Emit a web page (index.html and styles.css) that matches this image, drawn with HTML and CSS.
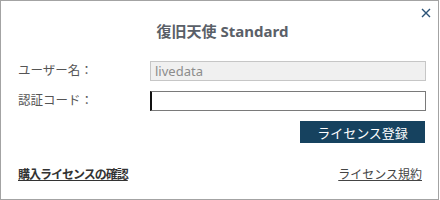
FILE: index.html
```html
<!DOCTYPE html>
<html lang="ja">
  <head>
    <meta charset="UTF-8" />
    <title>復旧天使 Standard</title>
    <link rel="stylesheet" href="styles.css">
  </head>
  <body>
    <div class="dialog">
      <button class="close-btn" aria-label="閉じる">
        <svg width="10" height="10" viewBox="0 0 10 10">
          <path d="M1 1 L9 9 M9 1 L1 9" stroke="#2b5377" stroke-width="1.4" fill="none" />
        </svg>
      </button>

      <h1 class="title">復旧天使 Standard</h1>

      <div class="form">
        <label class="label" for="user-name">ユーザー名：</label>
        <input type="text" id="user-name" class="field field-disabled" value="livedata" disabled />

        <label class="label" for="auth-code">認証コード：</label>
        <input type="text" id="auth-code" class="field field-active" />
      </div>

      <div class="actions">
        <button class="register-btn">ライセンス登録</button>
      </div>

      <div class="footer">
        <a href="#" class="link link-bold">購入ライセンスの確認</a>
        <a href="#" class="link">ライセンス規約</a>
      </div>
    </div>
  </body>
</html>
```

FILE: styles.css
```css
body {
  margin: 0;
  background: #fff;
  font-family: "Noto Sans", "Noto Sans CJK JP", sans-serif;
}

.dialog {
  position: relative;
  box-sizing: border-box;
  width: 439px;
  height: 200px;
  border: 1px solid #a3a3a3;
  padding: 0 13px 0 17px;
  background: #fff;
}

.close-btn {
  position: absolute;
  top: 6px;
  right: 6px;
  width: 12px;
  height: 12px;
  padding: 0;
  border: none;
  background: none;
  display: flex;
  align-items: center;
  justify-content: center;
  cursor: pointer;
}

.title {
  margin: 0;
  padding-top: 19px;
  height: 22px;
  line-height: 22px;
  text-align: center;
  font-size: 15px;
  font-weight: bold;
  color: #5a6068;
  padding-left: 2px;
}

.form {
  display: grid;
  grid-template-columns: 132px 1fr;
  row-gap: 10px;
  margin-top: 19px;
  align-items: center;
}

.label {
  font-size: 12.5px;
  color: #555;
  line-height: 20px;
}

.field {
  box-sizing: border-box;
  width: 276px;
  height: 20px;
  margin: 0;
  padding: 0 4px;
  font-family: "Noto Sans", "Noto Sans CJK JP", sans-serif;
  font-size: 13px;
  outline: none;
}

.field-disabled {
  background: #f0f0f0;
  border: 1px solid #c6c6c6;
  color: #8c8c8c;
}

.field-active {
  background: #fff;
  border: 1px solid #7a7a7a;
  border-left: 2px solid #111;
}

.actions {
  display: flex;
  justify-content: flex-end;
  margin-top: 10px;
  padding-right: 0;
}

.register-btn {
  width: 125px;
  height: 22px;
  padding: 0;
  border: none;
  background: #16425f;
  color: #fff;
  font-family: "Noto Sans", "Noto Sans CJK JP", sans-serif;
  font-size: 13px;
  cursor: pointer;
}

.footer {
  display: flex;
  justify-content: space-between;
  margin-top: 24px;
  padding-right: 3px;
}

.link {
  font-size: 12px;
  line-height: 16px;
  color: #444;
  text-decoration: underline;
}

.link-bold {
  font-weight: bold;
  color: #333;
  letter-spacing: -1px;
}
```
